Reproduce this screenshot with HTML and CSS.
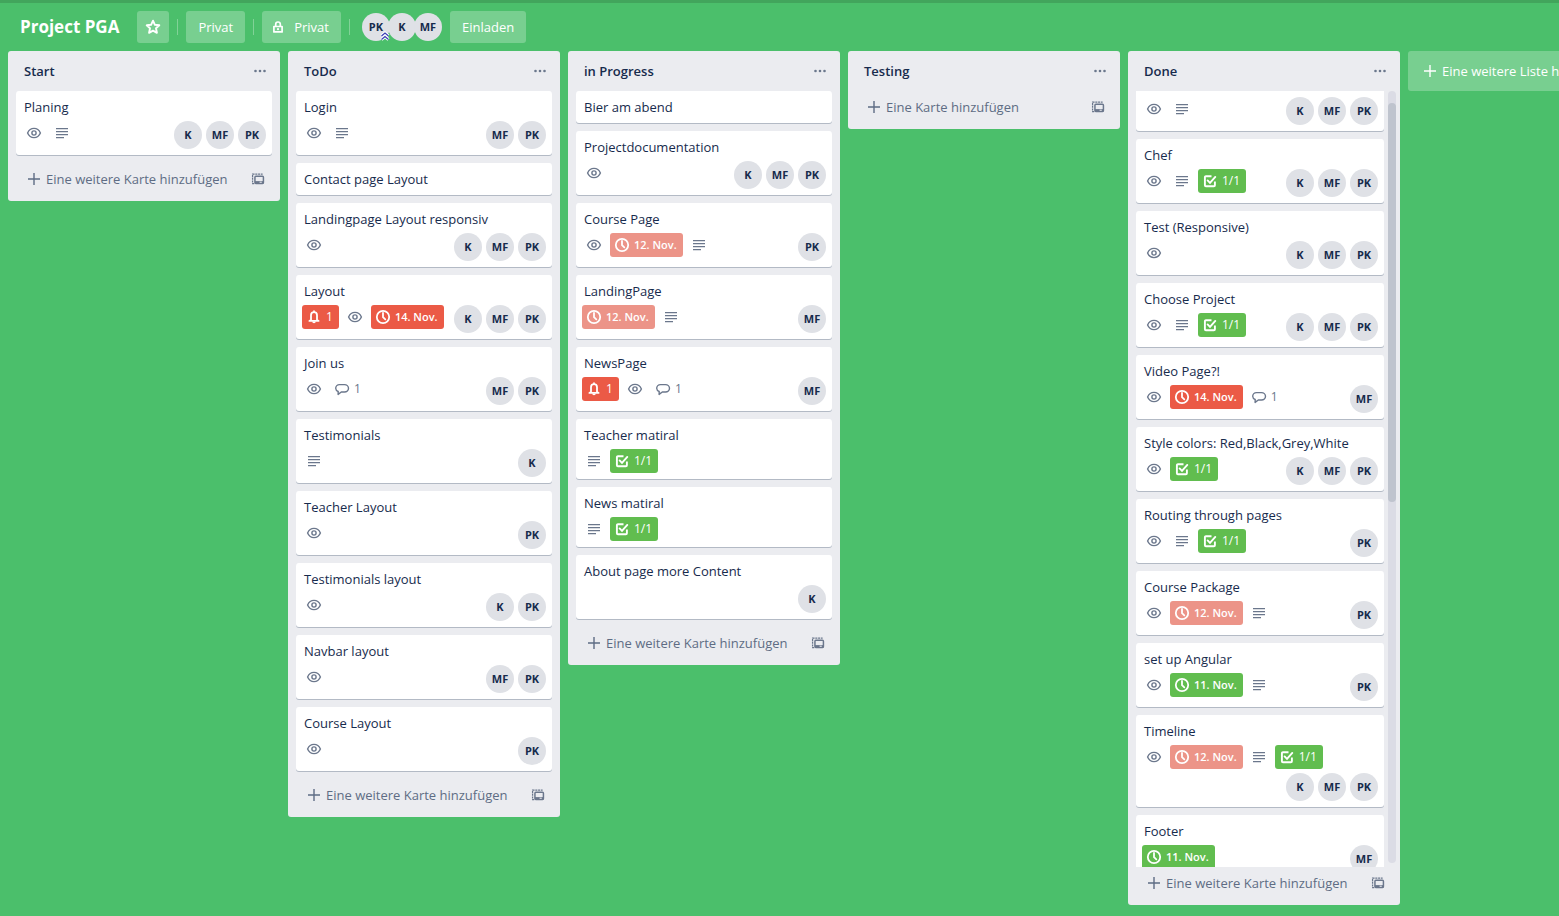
FILE: index.html
```html
<!DOCTYPE html>
<html lang="de">
<head>
<meta charset="utf-8">
<meta name="viewport" content="width=device-width, initial-scale=1">
<title>Project PGA</title>
<link rel="stylesheet" href="styles.css">
</head>
<body>
<svg class="sprite" aria-hidden="true">
  <symbol id="eye" viewBox="0 0 16 16"><g fill="none" stroke="currentColor" stroke-width="1.400"><path d="M1.600 8C2.800 5.200 5 3.400 8 3.400S13.200 5.200 14.400 8C13.200 10.800 11 12.600 8 12.600S2.800 10.800 1.600 8Z"/><circle cx="8" cy="8" r="2.100"/></g></symbol>
  <symbol id="text" viewBox="0 0 16 16"><path fill="currentColor" d="M2 3h12v1.300H2zM2 6h12v1.300H2zM2 9h12v1.300H2zM2 12h8v1.300H2z"/></symbol>
  <symbol id="clock" viewBox="0 0 16 16"><g fill="none" stroke="currentColor" stroke-width="1.800"><circle cx="8" cy="8" r="6.200"/><path d="M8 4v4.200l2.300 2.100" stroke-linecap="round"/></g></symbol>
  <symbol id="check" viewBox="0 0 16 16"><g fill="none" stroke="currentColor" stroke-width="1.900"><path d="M9.500 3.200H3.900a1 1 0 0 0-1 1v8a1 1 0 0 0 1 1h8a1 1 0 0 0 1-1V8.500"/><path d="M5.600 7.400l2.400 2.500 5.300-6" stroke-linecap="round"/></g></symbol>
  <symbol id="bell" viewBox="0 0 16 16"><path d="M5 10.800V6.200a3 3 0 0 1 6 0v4.600l1.600 1.100H3.400zM8 3V2.200" fill="none" stroke="currentColor" stroke-width="1.800" stroke-linejoin="round" stroke-linecap="round"/><path d="M6.200 12.500h3.600a1.800 1.800 0 0 1-3.600 0z" fill="currentColor"/></symbol>
  <symbol id="comment" viewBox="0 0 16 16"><path d="M5.500 3.600h5a4 3.700 0 0 1 0 7.400H7.300L4.100 13.400 4.200 10.500A3.700 3.700 0 0 1 1.700 7.200C1.700 5.200 3.300 3.600 5.500 3.600Z" fill="none" stroke="currentColor" stroke-width="1.400" stroke-linejoin="round"/></symbol>
  <symbol id="plus" viewBox="0 0 16 16"><path d="M8 2v12M2 8h12" stroke="currentColor" stroke-width="1.400" fill="none"/></symbol>
  <symbol id="dots" viewBox="0 0 16 16"><g fill="currentColor"><circle cx="3.500" cy="8" r="1.300"/><circle cx="8" cy="8" r="1.300"/><circle cx="12.500" cy="8" r="1.300"/></g></symbol>
  <symbol id="template" viewBox="0 0 16 16"><g fill="none" stroke="currentColor"><path d="M1.800 12V2.300h11.500" stroke-width="1.400" stroke-dasharray="2.400 .8"/><rect x="4.500" y="4.900" width="9.700" height="8.200" rx="1" stroke-width="1.700"/><path d="M1.200 13.300h2.500" stroke-width="1.400"/></g><path d="M4.500 10.400h10v2.700h-10z" fill="currentColor"/><path d="M9.800 11.100h2.500v1.200H9.800z" fill="#ebecf0"/></symbol>
  <symbol id="star" viewBox="0 0 16 16"><path d="M8 1.700l1.900 4.100 4.400.5-3.300 3 .9 4.500L8 11.600l-3.900 2.200.9-4.500-3.300-3 4.400-.5z" fill="none" stroke="currentColor" stroke-width="1.900" stroke-linejoin="round"/></symbol>
  <symbol id="lock" viewBox="0 0 16 16"><path d="M5.700 7.500V5.300a2.300 2.300 0 0 1 4.600 0V7.500M3.900 7.500h8.200v5.400H3.900z" fill="none" stroke="currentColor" stroke-width="1.700" stroke-linejoin="round"/><circle cx="8" cy="10.200" r="1.100" fill="currentColor"/></symbol>
  <symbol id="chevrons" viewBox="0 0 10 10"><path d="M1.500 5l3.500-3 3.500 3M1.500 8.500l3.500-3 3.500 3" fill="none" stroke="#fff" stroke-width="3"/><path d="M1.500 5l3.500-3 3.500 3M1.500 8.500l3.500-3 3.500 3" fill="none" stroke="#3a3fb5" stroke-width="1.200"/></symbol>
</svg>

<header class="board-header">
  <h1 class="board-title">Project PGA</h1>
  <button class="hbtn hbtn-icon" aria-label="Favorit"><svg class="icon"><use href="#star"/></svg></button>
  <span class="divider"></span>
  <button class="hbtn">Privat</button>
  <span class="divider"></span>
  <button class="hbtn hbtn-lock"><svg class="icon"><use href="#lock"/></svg>Privat</button>
  <span class="divider"></span>
  <div class="facepile">
    <span class="avatar">PK<svg class="admin"><use href="#chevrons"/></svg></span><span class="avatar">K</span><span class="avatar">MF</span>
  </div>
  <button class="hbtn">Einladen</button>
</header>

<main class="board">
  <section class="list">
    <header class="list-header"><h2>Start</h2><button class="menu" aria-label="Menü"><svg class="icon"><use href="#dots"/></svg></button></header>
    <div class="cards">
      <article class="card"><h3>Planing</h3><div class="foot"><div class="badges"><span class="badge"><svg class="icon"><use href="#eye"/></svg></span><span class="badge"><svg class="icon"><use href="#text"/></svg></span></div><div class="members"><span class="avatar">K</span><span class="avatar">MF</span><span class="avatar">PK</span></div></div></article>
    </div>
    <footer class="list-footer"><button class="add"><svg class="icon"><use href="#plus"/></svg>Eine weitere Karte hinzufügen</button><button class="tpl" aria-label="Vorlage"><svg class="icon"><use href="#template"/></svg></button></footer>
  </section>

  <section class="list">
    <header class="list-header"><h2>ToDo</h2><button class="menu" aria-label="Menü"><svg class="icon"><use href="#dots"/></svg></button></header>
    <div class="cards">
      <article class="card"><h3>Login</h3><div class="foot"><div class="badges"><span class="badge"><svg class="icon"><use href="#eye"/></svg></span><span class="badge"><svg class="icon"><use href="#text"/></svg></span></div><div class="members"><span class="avatar">MF</span><span class="avatar">PK</span></div></div></article>
      <article class="card"><h3>Contact page Layout</h3></article>
      <article class="card"><h3>Landingpage Layout responsiv</h3><div class="foot"><div class="badges"><span class="badge"><svg class="icon"><use href="#eye"/></svg></span></div><div class="members"><span class="avatar">K</span><span class="avatar">MF</span><span class="avatar">PK</span></div></div></article>
      <article class="card"><h3>Layout</h3><div class="foot"><div class="badges"><span class="badge red"><svg class="icon"><use href="#bell"/></svg>1</span><span class="badge"><svg class="icon"><use href="#eye"/></svg></span><span class="badge red date"><svg class="icon"><use href="#clock"/></svg>14. Nov.</span></div><div class="members"><span class="avatar">K</span><span class="avatar">MF</span><span class="avatar">PK</span></div></div></article>
      <article class="card"><h3>Join us</h3><div class="foot"><div class="badges"><span class="badge"><svg class="icon"><use href="#eye"/></svg></span><span class="badge"><svg class="icon"><use href="#comment"/></svg>1</span></div><div class="members"><span class="avatar">MF</span><span class="avatar">PK</span></div></div></article>
      <article class="card"><h3>Testimonials</h3><div class="foot"><div class="badges"><span class="badge"><svg class="icon"><use href="#text"/></svg></span></div><div class="members"><span class="avatar">K</span></div></div></article>
      <article class="card"><h3>Teacher Layout</h3><div class="foot"><div class="badges"><span class="badge"><svg class="icon"><use href="#eye"/></svg></span></div><div class="members"><span class="avatar">PK</span></div></div></article>
      <article class="card"><h3>Testimonials layout</h3><div class="foot"><div class="badges"><span class="badge"><svg class="icon"><use href="#eye"/></svg></span></div><div class="members"><span class="avatar">K</span><span class="avatar">PK</span></div></div></article>
      <article class="card"><h3>Navbar layout</h3><div class="foot"><div class="badges"><span class="badge"><svg class="icon"><use href="#eye"/></svg></span></div><div class="members"><span class="avatar">MF</span><span class="avatar">PK</span></div></div></article>
      <article class="card"><h3>Course Layout</h3><div class="foot"><div class="badges"><span class="badge"><svg class="icon"><use href="#eye"/></svg></span></div><div class="members"><span class="avatar">PK</span></div></div></article>
    </div>
    <footer class="list-footer"><button class="add"><svg class="icon"><use href="#plus"/></svg>Eine weitere Karte hinzufügen</button><button class="tpl" aria-label="Vorlage"><svg class="icon"><use href="#template"/></svg></button></footer>
  </section>

  <section class="list">
    <header class="list-header"><h2>in Progress</h2><button class="menu" aria-label="Menü"><svg class="icon"><use href="#dots"/></svg></button></header>
    <div class="cards">
      <article class="card"><h3>Bier am abend</h3></article>
      <article class="card"><h3>Projectdocumentation</h3><div class="foot"><div class="badges"><span class="badge"><svg class="icon"><use href="#eye"/></svg></span></div><div class="members"><span class="avatar">K</span><span class="avatar">MF</span><span class="avatar">PK</span></div></div></article>
      <article class="card"><h3>Course Page</h3><div class="foot"><div class="badges"><span class="badge"><svg class="icon"><use href="#eye"/></svg></span><span class="badge pink date"><svg class="icon"><use href="#clock"/></svg>12. Nov.</span><span class="badge"><svg class="icon"><use href="#text"/></svg></span></div><div class="members"><span class="avatar">PK</span></div></div></article>
      <article class="card"><h3>LandingPage</h3><div class="foot"><div class="badges"><span class="badge pink date"><svg class="icon"><use href="#clock"/></svg>12. Nov.</span><span class="badge"><svg class="icon"><use href="#text"/></svg></span></div><div class="members"><span class="avatar">MF</span></div></div></article>
      <article class="card"><h3>NewsPage</h3><div class="foot"><div class="badges"><span class="badge red"><svg class="icon"><use href="#bell"/></svg>1</span><span class="badge"><svg class="icon"><use href="#eye"/></svg></span><span class="badge"><svg class="icon"><use href="#comment"/></svg>1</span></div><div class="members"><span class="avatar">MF</span></div></div></article>
      <article class="card"><h3>Teacher matiral</h3><div class="foot"><div class="badges"><span class="badge"><svg class="icon"><use href="#text"/></svg></span><span class="badge green"><svg class="icon"><use href="#check"/></svg>1/1</span></div></div></article>
      <article class="card"><h3>News matiral</h3><div class="foot"><div class="badges"><span class="badge"><svg class="icon"><use href="#text"/></svg></span><span class="badge green"><svg class="icon"><use href="#check"/></svg>1/1</span></div></div></article>
      <article class="card"><h3>About page more Content</h3><div class="foot"><div class="members"><span class="avatar">K</span></div></div></article>
    </div>
    <footer class="list-footer"><button class="add"><svg class="icon"><use href="#plus"/></svg>Eine weitere Karte hinzufügen</button><button class="tpl" aria-label="Vorlage"><svg class="icon"><use href="#template"/></svg></button></footer>
  </section>

  <section class="list">
    <header class="list-header"><h2>Testing</h2><button class="menu" aria-label="Menü"><svg class="icon"><use href="#dots"/></svg></button></header>
    <footer class="list-footer"><button class="add"><svg class="icon"><use href="#plus"/></svg>Eine Karte hinzufügen</button><button class="tpl" aria-label="Vorlage"><svg class="icon"><use href="#template"/></svg></button></footer>
  </section>

  <section class="list">
    <header class="list-header"><h2>Done</h2><button class="menu" aria-label="Menü"><svg class="icon"><use href="#dots"/></svg></button></header>
    <div class="scroll-area">
      <div class="cards">
        <article class="card card-continued"><div class="foot"><div class="badges"><span class="badge"><svg class="icon"><use href="#eye"/></svg></span><span class="badge"><svg class="icon"><use href="#text"/></svg></span></div><div class="members"><span class="avatar">K</span><span class="avatar">MF</span><span class="avatar">PK</span></div></div></article>
        <article class="card"><h3>Chef</h3><div class="foot"><div class="badges"><span class="badge"><svg class="icon"><use href="#eye"/></svg></span><span class="badge"><svg class="icon"><use href="#text"/></svg></span><span class="badge green"><svg class="icon"><use href="#check"/></svg>1/1</span></div><div class="members"><span class="avatar">K</span><span class="avatar">MF</span><span class="avatar">PK</span></div></div></article>
        <article class="card"><h3>Test (Responsive)</h3><div class="foot"><div class="badges"><span class="badge"><svg class="icon"><use href="#eye"/></svg></span></div><div class="members"><span class="avatar">K</span><span class="avatar">MF</span><span class="avatar">PK</span></div></div></article>
        <article class="card"><h3>Choose Project</h3><div class="foot"><div class="badges"><span class="badge"><svg class="icon"><use href="#eye"/></svg></span><span class="badge"><svg class="icon"><use href="#text"/></svg></span><span class="badge green"><svg class="icon"><use href="#check"/></svg>1/1</span></div><div class="members"><span class="avatar">K</span><span class="avatar">MF</span><span class="avatar">PK</span></div></div></article>
        <article class="card"><h3>Video Page?!</h3><div class="foot"><div class="badges"><span class="badge"><svg class="icon"><use href="#eye"/></svg></span><span class="badge red date"><svg class="icon"><use href="#clock"/></svg>14. Nov.</span><span class="badge"><svg class="icon"><use href="#comment"/></svg>1</span></div><div class="members"><span class="avatar">MF</span></div></div></article>
        <article class="card"><h3>Style colors: Red,Black,Grey,White</h3><div class="foot"><div class="badges"><span class="badge"><svg class="icon"><use href="#eye"/></svg></span><span class="badge green"><svg class="icon"><use href="#check"/></svg>1/1</span></div><div class="members"><span class="avatar">K</span><span class="avatar">MF</span><span class="avatar">PK</span></div></div></article>
        <article class="card"><h3>Routing through pages</h3><div class="foot"><div class="badges"><span class="badge"><svg class="icon"><use href="#eye"/></svg></span><span class="badge"><svg class="icon"><use href="#text"/></svg></span><span class="badge green"><svg class="icon"><use href="#check"/></svg>1/1</span></div><div class="members"><span class="avatar">PK</span></div></div></article>
        <article class="card"><h3>Course Package</h3><div class="foot"><div class="badges"><span class="badge"><svg class="icon"><use href="#eye"/></svg></span><span class="badge pink date"><svg class="icon"><use href="#clock"/></svg>12. Nov.</span><span class="badge"><svg class="icon"><use href="#text"/></svg></span></div><div class="members"><span class="avatar">PK</span></div></div></article>
        <article class="card"><h3>set up Angular</h3><div class="foot"><div class="badges"><span class="badge"><svg class="icon"><use href="#eye"/></svg></span><span class="badge green date"><svg class="icon"><use href="#clock"/></svg>11. Nov.</span><span class="badge"><svg class="icon"><use href="#text"/></svg></span></div><div class="members"><span class="avatar">PK</span></div></div></article>
        <article class="card"><h3>Timeline</h3><div class="foot"><div class="badges"><span class="badge"><svg class="icon"><use href="#eye"/></svg></span><span class="badge pink date"><svg class="icon"><use href="#clock"/></svg>12. Nov.</span><span class="badge"><svg class="icon"><use href="#text"/></svg></span><span class="badge green"><svg class="icon"><use href="#check"/></svg>1/1</span></div><div class="members"><span class="avatar">K</span><span class="avatar">MF</span><span class="avatar">PK</span></div></div></article>
        <article class="card"><h3>Footer</h3><div class="foot"><div class="badges"><span class="badge green date"><svg class="icon"><use href="#clock"/></svg>11. Nov.</span></div><div class="members"><span class="avatar">MF</span></div></div></article>
      </div>
      <div class="track"><div class="thumb"></div></div>
    </div>
    <footer class="list-footer"><button class="add"><svg class="icon"><use href="#plus"/></svg>Eine weitere Karte hinzufügen</button><button class="tpl" aria-label="Vorlage"><svg class="icon"><use href="#template"/></svg></button></footer>
  </section>

  <button class="add-list"><svg class="icon"><use href="#plus"/></svg>Eine weitere Liste hinzufügen</button>
</main>
</body>
</html>
```

FILE: styles.css
```css
* { box-sizing: border-box; }

body {
  margin: 0;
  height: 100vh;
  display: flex;
  flex-direction: column;
  overflow: hidden;
  border-top: 3px solid #42a55c;
  background: #4bbf6b;
  color: #172b4d;
  font: 13px/20px "Open Sans", "Noto Sans", sans-serif;
}

h1, h2, h3 { margin: 0; font-size: inherit; }

button {
  border: 0;
  padding: 0;
  background: none;
  color: inherit;
  font: inherit;
  cursor: pointer;
}

.sprite { display: none; }
.icon { width: 16px; height: 16px; flex: none; display: block; }

/* Board header */
.board-header {
  display: flex;
  align-items: center;
  gap: 8px;
  padding: 8px 8px 8px 20px;
  flex: none;
  color: #fff;
}

.board-title { font-size: 17px; font-weight: 700; margin-right: 10px; white-space: nowrap; }

.hbtn {
  height: 32px;
  padding: 0 12px;
  border-radius: 3px;
  background: rgba(255, 255, 255, .25);
  display: flex;
  align-items: center;
  justify-content: center;
}

.hbtn-icon { width: 32px; padding: 0; }
.hbtn-lock { padding-left: 8px; gap: 8px; }
.divider { width: 1px; height: 16px; background: rgba(255, 255, 255, .3); }
.facepile { display: flex; margin-left: 4px; }
.facepile .avatar + .avatar { margin-left: -2px; }

.avatar {
  position: relative;
  flex: none;
  width: 28px;
  height: 28px;
  border-radius: 50%;
  background: #dfe1e6;
  color: #172b4d;
  font-size: 11px;
  font-weight: 700;
  line-height: 28px;
  text-align: center;
}

.admin { position: absolute; right: 0; bottom: 0; width: 10px; height: 10px; z-index: 1; }
.facepile .avatar:first-child { z-index: 1; }

/* Lists */
.board {
  flex: 1;
  min-height: 0;
  display: flex;
  align-items: flex-start;
  gap: 8px;
  padding: 0 8px 11px;
  overflow: hidden;
}

.list {
  flex: none;
  width: 272px;
  max-height: 100%;
  display: flex;
  flex-direction: column;
  border-radius: 3px;
  background: #ebecf0;
}

.list-header {
  flex: none;
  height: 40px;
  padding: 0 12px 0 16px;
  display: flex;
  align-items: center;
  justify-content: space-between;
}

.list-header h2 { font-weight: 600; }
.menu, .tpl { color: #6b778c; }

.cards {
  flex: 1;
  min-width: 0;
  min-height: 0;
  padding: 0 8px 8px;
  display: flex;
  flex-direction: column;
  gap: 8px;
}

.scroll-area { flex: 1; min-height: 0; display: flex; padding-right: 4px; }
.scroll-area .cards { overflow: hidden; padding: 0 4px 0 8px; }
.track { flex: none; width: 8px; margin-bottom: 4px; padding-top: 12px; border-radius: 4px; background: #dbdce5; }
.thumb { height: 52.5%; border-radius: 4px; background: #bfc4ce; }

.card {
  flex: none;
  padding: 6px 6px 2px;
  border-radius: 3px;
  background: #fff;
  box-shadow: 0 1px 0 #b3bac5;
}

.card h3 { margin: 0 2px 4px; font-weight: 400; }
.card-continued { border-radius: 0 0 3px 3px; }

.foot { display: flex; flex-wrap: wrap; align-items: flex-start; }
.badges, .members { display: flex; gap: 4px; margin-bottom: 4px; }
.members { margin-left: auto; }

.badge {
  height: 24px;
  min-width: 24px;
  padding: 0 4px;
  display: flex;
  align-items: center;
  gap: 4px;
  border-radius: 3px;
  color: #6b778c;
  font-size: 12px;
  white-space: nowrap;
}

.red, .pink, .green { padding-right: 6px; color: #fff; }
.red { background: #eb5a46; }
.pink { background: #ec9488; }
.green { background: #61bd4f; }
.date { font-size: 11px; font-weight: 600; }

.list-footer {
  flex: none;
  height: 38px;
  padding: 0 15px 6px 18px;
  display: flex;
  align-items: center;
  justify-content: space-between;
  color: #5e6c84;
}

.tpl .icon { width: 14px; height: 14px; }
.add { display: flex; align-items: center; gap: 4px; }

.add-list {
  flex: none;
  width: 272px;
  height: 40px;
  padding: 0 14px;
  display: flex;
  align-items: center;
  gap: 4px;
  border-radius: 3px;
  background: rgba(255, 255, 255, .25);
  color: #fff;
}
```
